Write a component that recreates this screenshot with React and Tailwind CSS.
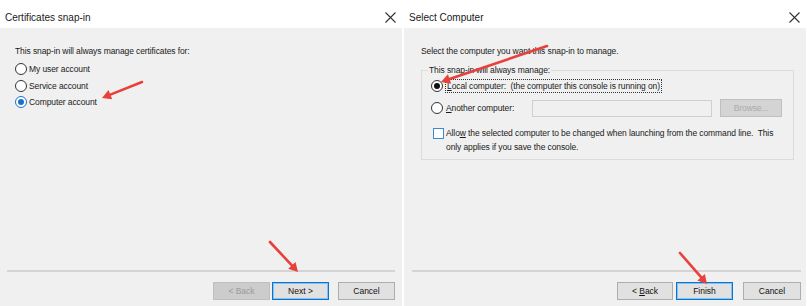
import React from 'react';

// Win10 wizard dialogs, side by side

const FONT = { fontFamily: '"Liberation Sans", Arial, sans-serif' };

const CloseGlyph = () => (
  <svg width="11" height="11" viewBox="0 0 11 11" className="text-[#333]">
    <path d="M0.5 0.5 L10.5 10.5 M10.5 0.5 L0.5 10.5" stroke="currentColor" strokeWidth="1.1" fill="none" />
  </svg>
);

const Radio = ({ checked, tone = 'blue' }) => {
  const ring = checked && tone === 'blue' ? 'border-[#1a73c8]' : 'border-[#333]';
  const dot = tone === 'blue' ? 'bg-[#1a73c8]' : 'bg-[#111]';
  return (
    <span className={`w-[12px] h-[12px] rounded-full border bg-white flex items-center justify-center shrink-0 ${ring}`}>
      {checked && <span className={`w-[6px] h-[6px] rounded-full ${dot}`} />}
    </span>
  );
};

const Button = ({ children, variant = 'normal', className = '' }) => {
  const styles = {
    normal: 'bg-[#e1e1e1] border-[#adadad] text-[#111]',
    primary: 'bg-[#e1e1e1] border-[#0078d7] text-[#111] shadow-[inset_0_0_0_1px_#8fbfe8]',
    disabled: 'bg-[#cccccc] border-[#bfbfbf] text-[#9a9a9a]',
  };
  return (
    <div className={`h-[18px] border flex items-center justify-center text-[8.5px] ${styles[variant]} ${className}`}>
      {children}
    </div>
  );
};

const Panel = ({ title, children, footer }) => (
  <div className="w-[402px] h-full flex flex-col">
    <div className="h-[28px] bg-white flex items-center justify-between pl-[5px] pr-[6px]">
      <span className="text-[10px] text-[#1a1a1a] mt-[6px]">{title}</span>
      <span className="mt-[6px]"><CloseGlyph /></span>
    </div>
    <div className="flex-1 bg-[#f0f0f0] flex flex-col">
      {children}
      <div className="mt-auto">{footer}</div>
    </div>
  </div>
);

const Arrow = ({ x1, y1, x2, y2 }) => {
  const a = Math.atan2(y2 - y1, x2 - x1);
  const L = 9;
  const W = 5;
  const bx = x2 - L * Math.cos(a);
  const by = y2 - L * Math.sin(a);
  const p1 = `${bx + W * Math.sin(a)},${by - W * Math.cos(a)}`;
  const p2 = `${bx - W * Math.sin(a)},${by + W * Math.cos(a)}`;
  return (
    <g>
      <line x1={x1} y1={y1} x2={bx} y2={by} stroke="#e8413b" strokeWidth="2.6" strokeLinecap="round" />
      <polygon points={`${x2},${y2} ${p1} ${p2}`} fill="#e8413b" />
    </g>
  );
};

export default function App() {
  return (
    <div className="relative w-[807px] h-[306px] bg-white flex gap-[2px] text-[#1a1a1a]" style={FONT}>
      {/* Left: Certificates snap-in */}
      <Panel
        title="Certificates snap-in"
        footer={
          <div>
            <div className="mx-[7px] h-[2px] bg-[#d4d4d4]" />
            <div className="flex justify-end gap-[2px] pr-[7px] pt-[10px] pb-[6px]">
              <Button variant="disabled" className="w-[57px]">&lt; Back</Button>
              <Button variant="primary" className="w-[57px]">Next &gt;</Button>
              <Button className="w-[57px] ml-[7px]">Cancel</Button>
            </div>
          </div>
        }
      >
        <div className="pl-[15px] pt-[17px] text-[8.5px] tracking-[-0.1px] leading-[12px]">
          <div>This snap-in will always manage certificates for:</div>
          <div className="mt-[6px] flex flex-col gap-[4.5px]">
            <label className="flex items-center gap-[2px]"><Radio />My user account</label>
            <label className="flex items-center gap-[2px]"><Radio />Service account</label>
            <label className="flex items-center gap-[2px]"><Radio checked />Computer account</label>
          </div>
        </div>
      </Panel>

      {/* Right: Select Computer */}
      <Panel
        title="Select Computer"
        footer={
          <div>
            <div className="ml-[8px] mr-[5px] h-[2px] bg-[#d4d4d4]" />
            <div className="flex justify-end gap-[3px] pr-[5px] pt-[10px] pb-[6px]">
              <Button className="w-[56px]">&lt;&nbsp;<u>B</u>ack</Button>
              <Button variant="primary" className="w-[57px]">Finish</Button>
              <Button className="w-[58px] ml-[7px]">Cancel</Button>
            </div>
          </div>
        }
      >
        <div className="pl-[17px] pr-[12px] pt-[17px] text-[8.5px] tracking-[-0.1px] leading-[12px]">
          <div>Select the computer you want this snap-in to manage.</div>
          <div className="relative mt-[13px] border border-[#dcdcdc] h-[90px] pl-[9px] pr-[11px] pt-[8px]">
            <span className="absolute -top-[7px] left-[6px] px-[1px] bg-[#f0f0f0]">This snap-in will always manage:</span>
            <label className="flex items-center gap-[2px]">
              <Radio checked tone="dark" />
              <span className="border border-dotted border-[#333] px-[1px]">
                <u>L</u>ocal computer:&nbsp; (the computer this console is running on)
              </span>
            </label>
            <div className="flex items-center mt-[6px]">
              <label className="flex items-center gap-[2px] w-[101px]">
                <Radio tone="dark" /><span className="pl-[1px]"><u>A</u>nother computer:</span>
              </label>
              <div className="w-[180px] h-[17px] border border-[#cfcfcf] bg-[#f0f0f0]" />
              <Button variant="disabled" className="w-[62px] ml-[8px] h-[17px] bg-[#d4d4d4] text-[#ababab]">Browse...</Button>
            </div>
            <div className="flex items-start gap-[2px] mt-[10px] pl-[2px]">
              <span className="w-[11px] h-[11px] border border-[#3c8ad6] bg-white shrink-0 mt-[1px]" />
              <span className="leading-[14px] -mt-[1px]">
                Allo<u>w</u> the selected computer to be changed when launching from the command line.&nbsp; This
                only applies if you save the console.
              </span>
            </div>
          </div>
        </div>
      </Panel>

      {/* annotation arrows */}
      <svg className="absolute inset-0 pointer-events-none" width="807" height="306">
        <Arrow x1={142} y1={82} x2={102} y2={98} />
        <Arrow x1={270} y1={242} x2={298} y2={272} />
        <Arrow x1={547} y1={46} x2={441} y2={82} />
        <Arrow x1={680} y1={253} x2={707} y2={284} />
      </svg>
    </div>
  );
}
